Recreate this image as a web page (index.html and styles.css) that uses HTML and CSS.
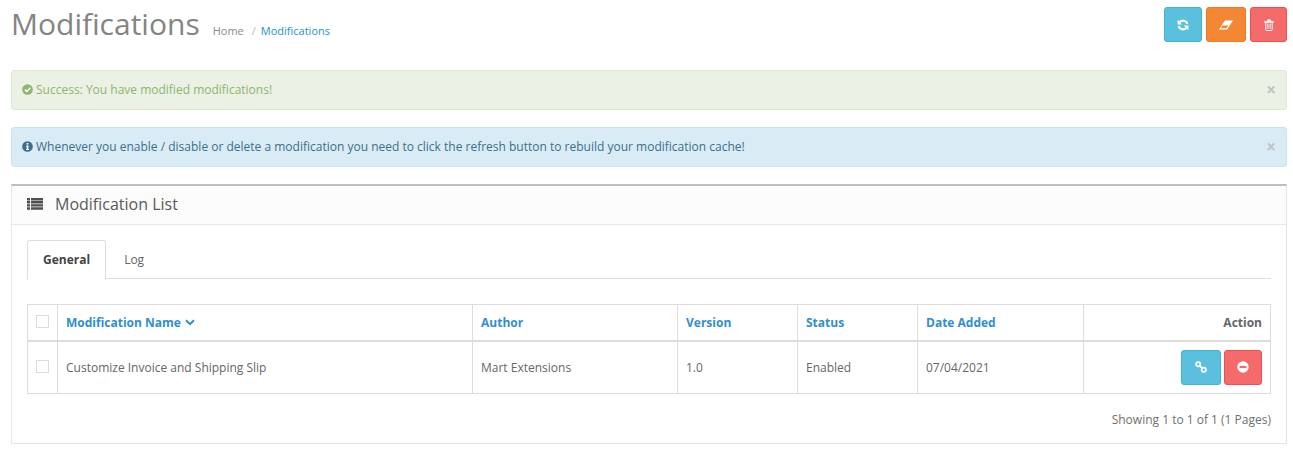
FILE: index.html
```html
<!DOCTYPE html>
<html lang="en">
<head>
<meta charset="utf-8">
<title>Modifications</title>
<link rel="stylesheet" href="styles.css">
</head>
<body>
<div class="page">
  <header class="page-header">
    <div class="title-group">
      <h1>Modifications</h1>
      <nav class="breadcrumb"><a class="crumb-home">Home</a><span class="sep">/</span><a class="crumb-link">Modifications</a></nav>
    </div>
    <div class="toolbar">
      <button class="btn btn-info btn-refresh" type="button"><svg class="ico" viewBox="0 0 12 12"><path d="M10.4 4.8A4.6 4.6 0 0 0 2.7 3" fill="none" stroke="#fff" stroke-width="2.2"/><path d="M.6.8v4.6h4.6z" fill="#fff"/><path d="M1.6 7.2A4.6 4.6 0 0 0 9.3 9" fill="none" stroke="#fff" stroke-width="2.2"/><path d="M11.4 11.2V6.6H6.8z" fill="#fff"/></svg></button>
      <button class="btn btn-warning btn-eraser" type="button"><svg class="ico" viewBox="0 0 14 10"><path d="M5.8.6H14L8.2 9.4H0z" fill="#fff"/><path d="M3.4 5.4 1.9 8.2H7.5L9.2 5.4z" fill="#f38733"/></svg></button>
      <button class="btn btn-danger btn-trash" type="button"><svg class="ico" viewBox="0 0 12 12"><path d="M1.6 2.4h8.8v1.1H1.6zM4.1 2.4 4.7.7h2.6l.6 1.7" fill="#fff" stroke="#fff" stroke-width=".6"/><path d="M2.8 3.6v7a.9.9 0 0 0 .9.9h4.6a.9.9 0 0 0 .9-.9v-7" fill="none" stroke="#fff" stroke-width="1"/><path d="M4.6 4.6v5.2M6 4.6v5.2M7.4 4.6v5.2" stroke="#fff" stroke-width=".7"/></svg></button>
    </div>
  </header>

  <div class="alert alert-success">
    <span class="alert-text"><svg class="ico-inline" viewBox="0 0 12 12"><circle cx="6" cy="6" r="5.8" fill="#8fb56e"/><path d="M3.1 6.1 5.2 8.1 9 4.2" fill="none" stroke="#fff" stroke-width="1.7"/></svg>Success: You have modified modifications!</span>
    <span class="close">×</span>
  </div>
  <div class="alert alert-info">
    <span class="alert-text"><svg class="ico-inline" viewBox="0 0 12 12"><circle cx="6" cy="6" r="5.8" fill="#3d6e8c"/><rect x="5" y="2.2" width="2" height="1.7" fill="#fff"/><path d="M4.5 5h2.5v3.7h.6v1.100H4.500V8.700h.6V6h-.6z" fill="#fff"/></svg>Whenever you enable / disable or delete a modification you need to click the refresh button to rebuild your modification cache!</span>
    <span class="close">×</span>
  </div>

  <section class="panel">
    <div class="panel-heading">
      <svg class="ico-list" viewBox="0 0 16 12"><path d="M0 0h3v2.400H0zM4 0h12v2.400H4zM0 3.100h3v2.400H0zM4 3.100h12v2.400H4zM0 6.200h3v2.400H0zM4 6.200h12v2.400H4zM0 9.300h3v2.400H0zM4 9.300h12v2.400H4z" fill="#4f4f4f"/></svg>
      <h3>Modification List</h3>
    </div>
    <div class="panel-body">
      <ul class="tabs">
        <li class="tab tab-active">General</li>
        <li class="tab">Log</li>
      </ul>
      <table class="list">
        <colgroup>
          <col class="c-check"><col class="c-name"><col class="c-author"><col class="c-version"><col class="c-status"><col class="c-date"><col class="c-action">
        </colgroup>
        <thead>
          <tr>
            <th class="cell-check"><span class="checkbox"></span></th>
            <th><a class="sort">Modification Name<svg class="ico-chevron" viewBox="0 0 10 7"><path d="M1 1.200 5 5.200 9 1.200" fill="none" stroke="#2f8fd0" stroke-width="2"/></svg></a></th>
            <th><a class="sort">Author</a></th>
            <th><a class="sort">Version</a></th>
            <th><a class="sort">Status</a></th>
            <th><a class="sort">Date Added</a></th>
            <th class="right">Action</th>
          </tr>
        </thead>
        <tbody>
          <tr>
            <td class="cell-check"><span class="checkbox"></span></td>
            <td>Customize Invoice and Shipping Slip</td>
            <td>Mart Extensions</td>
            <td>1.0</td>
            <td>Enabled</td>
            <td>07/04/2021</td>
            <td class="right">
              <div class="row-actions">
                <button class="btn btn-info btn-link" type="button"><svg class="ico" viewBox="0 0 12 12"><g fill="none" stroke="#fff" stroke-width="1.800"><circle cx="3.200" cy="3.200" r="2.100"/><circle cx="8.800" cy="8.800" r="2.100"/><path d="M4.800 4.800 7.200 7.200"/></g></svg></button>
                <button class="btn btn-danger btn-minus" type="button"><svg class="ico" viewBox="0 0 12 12"><circle cx="6" cy="6" r="5.700" fill="#fff"/><rect x="2.600" y="4.900" width="6.800" height="2.200" fill="#f56b6b"/></svg></button>
              </div>
            </td>
          </tr>
        </tbody>
      </table>
      <p class="results">Showing 1 to 1 of 1 (1 Pages)</p>
    </div>
  </section>
</div>
</body>
</html>
```
FILE: styles.css
```css
* { box-sizing: border-box; }
html, body { margin: 0; padding: 0; }
body {
  font-family: "Open Sans", sans-serif;
  font-size: 12px;
  line-height: 18px;
  color: #666;
  background: #fff;
}
.page { padding: 0 6px 16px 11px; }

.page-header {
  display: flex;
  justify-content: space-between;
  align-items: flex-start;
  height: 70px;
  padding-top: 7px;
}
.title-group { display: flex; align-items: flex-start; margin-top: -1px; }
h1 {
  margin: 0;
  font-size: 30px;
  line-height: 36px;
  font-weight: 400;
  color: #848484;
}
.breadcrumb { margin: 16px 0 0 13px; font-size: 11px; }
.crumb-home { color: #8a8a8a; }
.sep { color: #bbb; margin: 0 5px 0 8px; }
.crumb-link { color: #1e91cf; }

.toolbar { display: flex; gap: 4px; }
.btn {
  display: flex;
  align-items: center;
  justify-content: center;
  height: 35px;
  padding: 0;
  border: 1px solid;
  border-radius: 3px;
}
.btn-info { background: #5bc0de; border-color: #3fb2d5; }
.btn-warning { background: #f38733; border-color: #ee7a22; }
.btn-danger { background: #f56b6b; border-color: #ef4f4f; }
.btn-refresh { width: 38px; }
.btn-eraser { width: 40px; }
.btn-trash { width: 37px; }
.btn-link { width: 40px; }
.btn-minus { width: 38px; }
.ico { width: 12px; height: 12px; }
.btn-eraser .ico { width: 14px; height: 10px; }

.alert {
  display: flex;
  justify-content: space-between;
  align-items: center;
  height: 40px;
  padding: 0 10px 0 10px;
  border: 1px solid;
  border-radius: 3px;
  margin-bottom: 17px;
}
.alert-success { background: #ebf1e5; border-color: #dde8d0; color: #8fb56e; }
.alert-info { background: #d9ecf5; border-color: #c6e5f0; color: #3d6e8c; }
.ico-inline { width: 11px; height: 11px; margin-right: 3px; vertical-align: -1px; }
.close { font-size: 17px; font-weight: 700; color: #c0c4c2; line-height: 18px; }

.panel {
  border: 1px solid #e6e6e6;
  border-top: 2px solid #bfbfbf;
  height: 260px;
}
.panel-heading {
  display: flex;
  align-items: center;
  height: 39px;
  padding-left: 15px;
  padding-bottom: 2px;
  background: #fcfcfc;
  border-bottom: 1px solid #e8e8e8;
}
.ico-list { width: 16px; height: 12px; margin-right: 12px; }
h3 {
  margin: 0;
  font-size: 16px;
  line-height: 20px;
  font-weight: 400;
  color: #595959;
}
.panel-body { padding: 15px 15px 0; }

.tabs {
  display: flex;
  list-style: none;
  margin: 0 0 25px;
  padding: 0;
  height: 39px;
  border-bottom: 1px solid #ddd;
}
.tab {
  padding: 10px 15px;
  height: 39px;
  margin-right: 2px;
  color: #666;
  border: 1px solid transparent;
  border-radius: 3px 3px 0 0;
}
.tab-active {
  height: 40px;
  font-weight: 700;
  color: #444;
  background: #fff;
  border-color: #ddd #ddd #fff;
}

.list {
  width: 100%;
  table-layout: fixed;
  border-collapse: collapse;
  border: 1px solid #ddd;
}
.c-check { width: 30px; }
.c-name { width: 415px; }
.c-author { width: 205px; }
.c-version { width: 120px; }
.c-status { width: 120px; }
.c-date { width: 166px; }
.list th, .list td {
  border: 1px solid #ddd;
  padding: 2px 8px 0;
  text-align: left;
  vertical-align: middle;
}
.list th { height: 36px; border-bottom: 2px solid #ddd; font-weight: 700; color: #666; }
.list td { height: 53px; }
.list .right { text-align: right; }
.list td.right { padding-top: 0; }
.sort { color: #2f8fd0; }
.ico-chevron { width: 10px; height: 7px; margin-left: 4px; vertical-align: 1px; }
.checkbox {
  display: block;
  width: 13px;
  height: 13px;
  border: 1px solid #ddd;
  background: #fff;
  margin-top: -4px;
}
.row-actions { display: flex; justify-content: flex-end; gap: 3px; }
.results { margin: 17px 0 0; text-align: right; color: #6f6f6f; }
```
